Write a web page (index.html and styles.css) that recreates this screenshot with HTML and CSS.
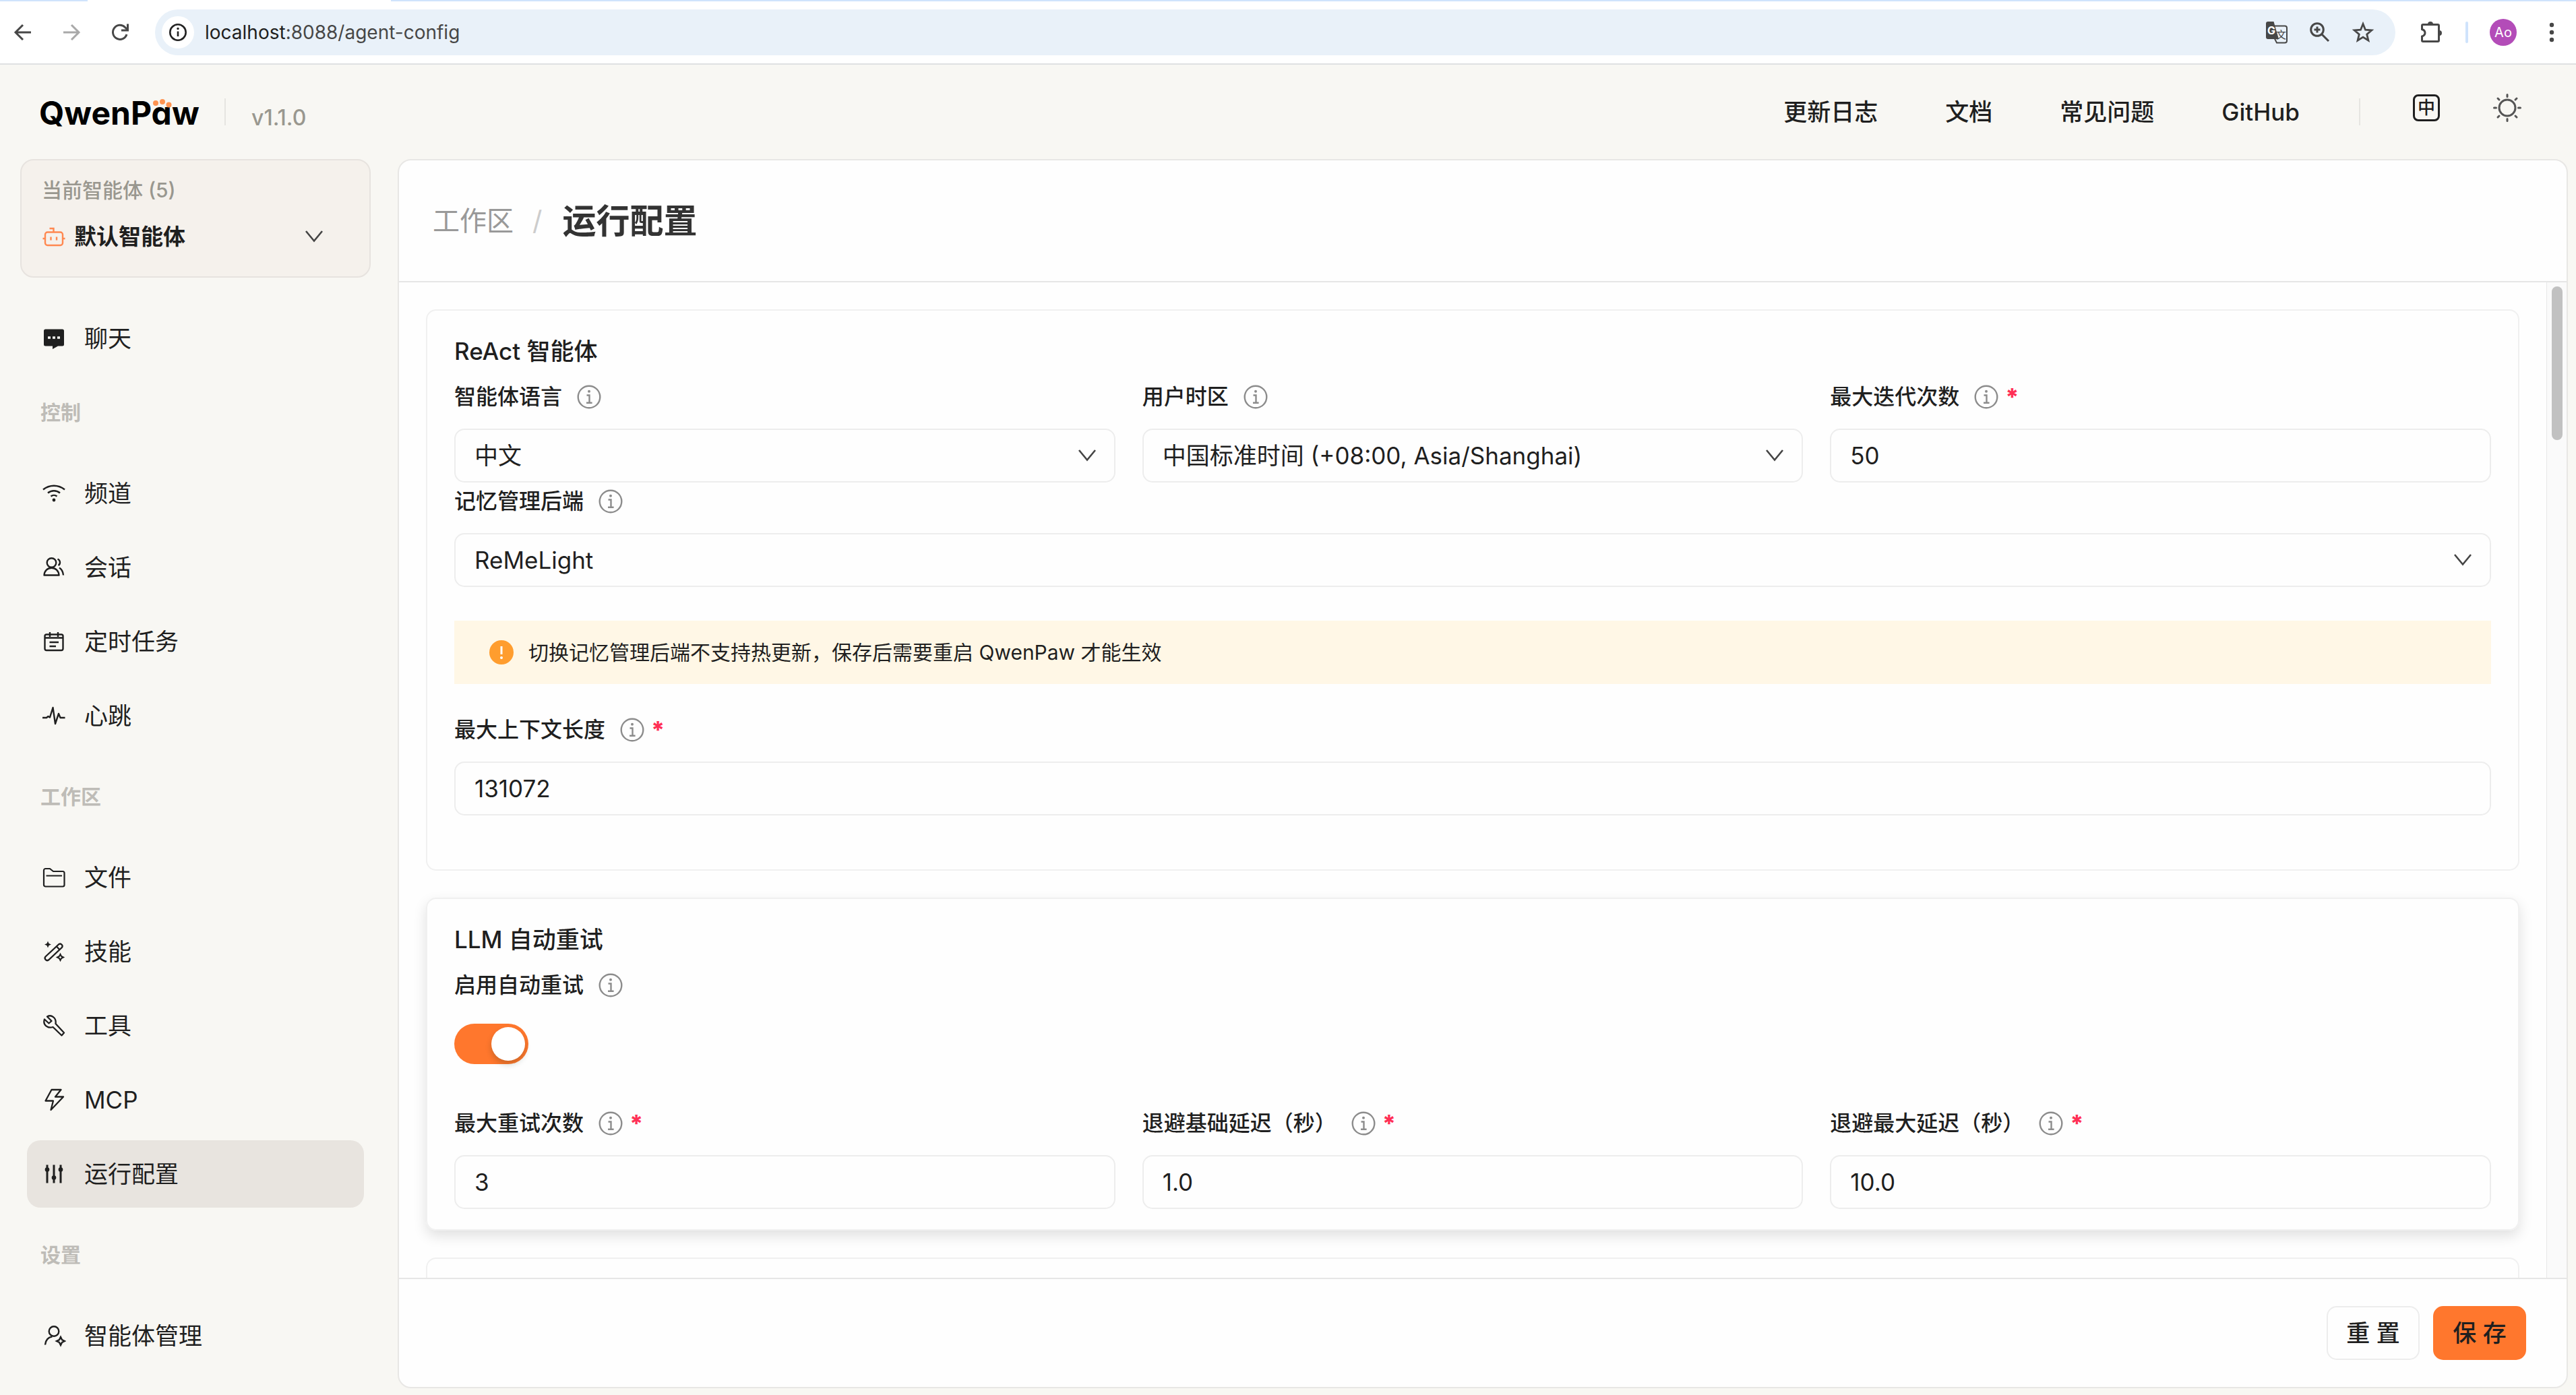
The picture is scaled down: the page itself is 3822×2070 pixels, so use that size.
FILE: index.html
```html
<!DOCTYPE html>
<html lang="zh-CN">
<head>
<meta charset="utf-8">
<title>QwenPaw</title>
<link rel="stylesheet" href="styles.css">
</head>
<body>
<svg class="sprite" aria-hidden="true">
  <symbol id="info" viewBox="0 0 36 36"><g fill="none" stroke="currentColor" stroke-width="2.4"><circle cx="18" cy="18" r="16.3"/><path d="M14.5 15.5h4v11M14 26.7h8.6"/></g><circle cx="18" cy="9.8" r="2" fill="currentColor"/></symbol>
  <symbol id="chevron" viewBox="0 0 28 20"><path d="M2 2l12 14.5L26 2" fill="none" stroke="currentColor" stroke-width="2.6"/></symbol>
</svg>

<div class="browser">
  <div class="tabstrip"><span class="tab-before"></span><span class="tab-active"></span><span class="tab-after"></span></div>
  <div class="toolbar">
    <div class="tools">
      <button class="tool" aria-label="后退"><svg viewBox="0 0 32 32"><path d="M28 16H6M16 5L5 16l11 11" fill="none" stroke="#474747" stroke-width="3"/></svg></button>
      <button class="tool" aria-label="前进"><svg viewBox="0 0 32 32"><path d="M4 16h22M16 5l11 11-11 11" fill="none" stroke="#a9a9a9" stroke-width="3"/></svg></button>
      <button class="tool" aria-label="重新加载"><svg viewBox="0 0 32 32"><path d="M26 19a10.500 10.500 0 1 1-2.500-10.500l3 3" fill="none" stroke="#474747" stroke-width="3"/><path d="M27.500 3.500v9.500H18" fill="none" stroke="#474747" stroke-width="3"/></svg></button>
    </div>
    <div class="omnibox">
      <span class="site-info"><svg viewBox="0 0 32 32"><circle cx="16" cy="16" r="11.700" fill="none" stroke="#222" stroke-width="2.600"/><path d="M16 14.500v7.500" stroke="#222" stroke-width="2.600"/><circle cx="16" cy="10.500" r="1.700" fill="#222"/></svg></span>
      <span class="url"><b>localhost</b>:8088/agent-config</span>
      <svg class="omni-icon" viewBox="0 0 36 36"><path d="M14 8.500h16a3 3 0 0 1 3 3v19a3 3 0 0 1-3 3H18l-3-6" fill="none" stroke="#474747" stroke-width="2"/><text x="17" y="27" font-size="15" fill="#474747">文</text><path d="M5 2h8.500l7.500 26H5a3 3 0 0 1-3-3V5a3 3 0 0 1 3-3z" fill="#474747"/><text x="4" y="21" font-size="16" font-weight="700" fill="#fff">G</text></svg>
      <svg class="omni-icon" viewBox="0 0 36 36"><g fill="none" stroke="#474747" stroke-width="3"><circle cx="14" cy="14" r="9.300"/><path d="M21 21l10 10M9.500 14h9M14 9.500v9"/></g></svg>
      <svg class="omni-icon" viewBox="0 0 36 36"><path d="M18 5.500l3.500 8.700 9.300.700-7.100 6 2.200 9.100L18 25.100 10.100 30l2.200-9.100-7.100-6 9.300-.700z" fill="none" stroke="#474747" stroke-width="2.800"/></svg>
    </div>
    <div class="extras">
      <svg class="omni-icon" viewBox="2 0 36 36"><path d="M7 6.500h22a1.500 1.500 0 0 1 1.500 1.500v22a1.500 1.500 0 0 1-1.500 1.500H7A1.500 1.500 0 0 1 5.500 30v-6c6-2 6-8.500 0-10.500V8A1.500 1.500 0 0 1 7 6.500z" fill="none" stroke="#474747" stroke-width="3"/><path d="M14 6a4 4 0 0 1 8 0zM31 15a4 4 0 0 1 0 8z" fill="#474747"/></svg>
      <span class="extras-line"></span>
      <span class="avatar">Ao</span>
      <svg class="omni-icon" viewBox="0 0 36 36"><g fill="#474747"><circle cx="18" cy="7" r="3.200"/><circle cx="18" cy="18" r="3.200"/><circle cx="18" cy="29" r="3.200"/></g></svg>
    </div>
  </div>
</div>

<header class="topbar">
  <div class="logo">QwenPaw<svg viewBox="0 0 28 20"><g fill="#ff9350"><circle cx="4" cy="10" r="4"/><circle cx="14" cy="8" r="4"/><circle cx="23.500" cy="12.500" r="4"/></g></svg></div>
  <span class="rule"></span>
  <span class="version">v1.1.0</span>
  <nav class="links"><a href="#">更新日志</a><a href="#">文档</a><a href="#">常见问题</a><a href="#">GitHub</a></nav>
  <span class="rule"></span>
  <div class="switches">
    <button class="lang" aria-label="语言">中</button>
    <button class="theme" aria-label="主题"><svg viewBox="0 0 44 44"><g fill="none" stroke="#555" stroke-width="3" stroke-linecap="round"><circle cx="22" cy="22" r="12"/><path d="M22 2.500v3M22 38.500v3M2.500 22h3M38.500 22h3M8 8l2 2M34 34l2 2M8 36l2-2M34 10l2-2"/></g></svg></button>
  </div>
</header>

<div class="layout">
  <aside class="sidebar">
    <button class="agent-card">
      <span class="agent-count">当前智能体 (5)</span>
      <span class="agent-row">
        <svg class="icon robot" viewBox="0 0 36 36"><g fill="none" stroke="currentColor" stroke-width="2.400"><rect x="5" y="11.500" width="26" height="19.500" rx="3.500"/><path d="M17.500 11.500V6h-6M1.500 21H5M31 21h3.500M13.500 18.500v5M22 18.500v5"/></g></svg>
        <span class="agent-name">默认智能体</span>
        <svg class="chev" viewBox="0 0 28 20"><use href="#chevron"/></svg>
      </span>
    </button>
    <nav class="menu">
      <a class="item" href="#"><svg class="icon" viewBox="0 0 36 36"><path d="M5.500 4.500h25A2.500 2.500 0 0 1 33 7v20a2.500 2.500 0 0 1-2.500 2.500H24l-8 4.500v-4.500H5.500A2.500 2.500 0 0 1 3 27V7a2.500 2.500 0 0 1 2.500-2.500z" fill="currentColor"/><path d="M9 17h4M16 17h4M23 17h4" stroke="#f8f7f3" stroke-width="3.400"/></svg>聊天</a>
      <h2 class="group first">控制</h2>
      <a class="item" href="#"><svg class="icon" viewBox="0 0 36 36"><g fill="none" stroke="currentColor" stroke-width="2.400"><path d="M2 12.500a25 25 0 0 1 32 0M9 17.500a14 14 0 0 1 18 0M13.500 22.500a7 7 0 0 1 9 0"/></g><circle cx="18" cy="28" r="2.400" fill="currentColor"/></svg>频道</a>
      <a class="item" href="#"><svg class="icon" viewBox="0 0 36 36"><g fill="none" stroke="currentColor" stroke-width="2.400" stroke-linejoin="round"><circle cx="14.500" cy="11" r="6.800"/><path d="M3.500 29.500C4 23 8.500 18.700 14.500 18.700S25 23 25.500 29.500zM23.500 5.500c4.500 2 4.500 7.500 1 9.500M26 18.500c3.500 2 5.500 6 6 11"/></g></svg>会话</a>
      <a class="item" href="#"><svg class="icon" viewBox="0 0 36 36"><g fill="none" stroke="currentColor" stroke-width="2.400"><rect x="4.500" y="7.500" width="27" height="23.500" rx="2.500"/><path d="M12 4v7M24 4v7M11.500 19h13.500M11.500 25h9.500M5 12.500h26" /></g></svg>定时任务</a>
      <a class="item" href="#"><svg class="icon" viewBox="0 0 36 36"><path d="M1 21h6l2.500-2 2.500 1.500L16.500 6 20 30l5-15 2.500 6h7" fill="none" stroke="currentColor" stroke-width="2.400" stroke-linejoin="round"/></svg>心跳</a>
      <h2 class="group">工作区</h2>
      <a class="item" href="#"><svg class="icon" viewBox="0 0 36 36"><path d="M3 7.500A2.500 2.500 0 0 1 5.500 5H12l5 4h14a2.500 2.500 0 0 1 2.500 2.500V29a2.500 2.500 0 0 1-2.500 2.500H5.500A2.500 2.500 0 0 1 3 29zM6.500 15.500h23.500" fill="none" stroke="currentColor" stroke-width="2.200"/></svg>文件</a>
      <a class="item" href="#"><svg class="icon" viewBox="0 0 36 36"><path d="M5.500 25.500L25.500 7a3.400 3.400 0 0 1 4.500 4.800L10 30.500a3.400 3.400 0 0 1-4.500-5zM22 10.500l4.500 4.800" fill="none" stroke="currentColor" stroke-width="2.300"/><path d="M9 2.500l1.500 3.500 3.500 1.500-3.500 1.500L9 12.500 7.500 9 4 7.500 7.500 6z" fill="currentColor"/><path d="M27.500 22l1.500 3 3 1.500-3 1.500-1.500 3-1.500-3-3-1.500 3-1.500z" fill="none" stroke="currentColor" stroke-width="2"/></svg>技能</a>
      <a class="item" href="#"><svg class="icon" viewBox="0 0 36 36"><path d="M4 8.500l6.500 6 4-3.500-6.500-6.500c6-3.500 14 1.500 12.500 10.500L33 28.500l-3.500 4L16.500 20C9 22.500 1 17 4 8.500z" fill="none" stroke="currentColor" stroke-width="2.300" stroke-linejoin="round"/></svg>工具</a>
      <a class="item" href="#"><svg class="icon" viewBox="0 0 36 36"><path d="M14.500 3h14L20 13.500h12L13.500 33l3.500-13.500H5.500z" fill="none" stroke="currentColor" stroke-width="2.300" stroke-linejoin="round"/></svg>MCP</a>
      <a class="item active" href="#"><svg class="icon" viewBox="0 0 36 36"><path d="M8 4.500v27M18 4.500v27M28 4.500v27" stroke="currentColor" stroke-width="3"/><g fill="currentColor"><circle cx="8" cy="11.500" r="3.300"/><circle cx="18" cy="23.500" r="3.300"/><circle cx="28" cy="11.500" r="3.300"/></g></svg>运行配置</a>
      <h2 class="group">设置</h2>
      <a class="item" href="#"><svg class="icon" viewBox="0 0 36 36"><g fill="none" stroke="currentColor" stroke-width="2.400"><circle cx="18" cy="11.500" r="7.300"/><path d="M5 31.500c.5-7 4-11 10.500-12.300M28 20l2 4 4 2-4 2-2 4-2-4-4-2 4-2z"/></g></svg>智能体管理</a>
    </nav>
  </aside>

  <main class="panel">
    <div class="panel-head">
      <span class="crumb">工作区</span><span class="slash">/</span><h1>运行配置</h1>
    </div>
    <div class="panel-body">
      <form class="scroll" id="config">
        <section class="card">
          <h3>ReAct 智能体</h3>
          <div class="cols">
            <div class="field">
              <label for="language">智能体语言<svg class="tip"><use href="#info"/></svg></label>
              <div class="pick"><select id="language"><option>中文</option></select><svg viewBox="0 0 28 20"><use href="#chevron"/></svg></div>
            </div>
            <div class="field">
              <label for="timezone">用户时区<svg class="tip"><use href="#info"/></svg></label>
              <div class="pick"><select id="timezone"><option>中国标准时间 (+08:00, Asia/Shanghai)</option></select><svg viewBox="0 0 28 20"><use href="#chevron"/></svg></div>
            </div>
            <div class="field">
              <label for="iterations">最大迭代次数<svg class="tip"><use href="#info"/></svg><i>*</i></label>
              <input id="iterations" type="text" value="50">
            </div>
          </div>
          <div class="field">
            <label for="memory">记忆管理后端<svg class="tip"><use href="#info"/></svg></label>
            <div class="pick"><select id="memory"><option>ReMeLight</option></select><svg viewBox="0 0 28 20"><use href="#chevron"/></svg></div>
          </div>
          <div class="notice">
            <svg viewBox="0 0 36 36"><circle cx="18" cy="18" r="18" fill="#ff9d2e"/><path d="M18 9v12" stroke="#fff" stroke-width="3"/><circle cx="18" cy="26" r="2" fill="#fff"/></svg>
            <span>切换记忆管理后端不支持热更新，保存后需要重启 QwenPaw 才能生效</span>
          </div>
          <div class="field spaced">
            <label for="context">最大上下文长度<svg class="tip"><use href="#info"/></svg><i>*</i></label>
            <input id="context" type="text" value="131072">
          </div>
        </section>

        <section class="card raised">
          <h3>LLM 自动重试</h3>
          <div class="field">
            <label for="retry">启用自动重试<svg class="tip"><use href="#info"/></svg></label>
            <div class="toggle-row"><input class="toggle" id="retry" type="checkbox" role="switch" checked></div>
          </div>
          <div class="cols">
            <div class="field">
              <label for="retries">最大重试次数<svg class="tip"><use href="#info"/></svg><i>*</i></label>
              <input id="retries" type="text" value="3">
            </div>
            <div class="field">
              <label for="base-delay">退避基础延迟（秒）<svg class="tip"><use href="#info"/></svg><i>*</i></label>
              <input id="base-delay" type="text" value="1.0">
            </div>
            <div class="field">
              <label for="max-delay">退避最大延迟（秒）<svg class="tip"><use href="#info"/></svg><i>*</i></label>
              <input id="max-delay" type="text" value="10.0">
            </div>
          </div>
        </section>

        <section class="card next"></section>
      </form>
      <div class="track"><div class="thumb"></div></div>
    </div>
    <div class="panel-foot">
      <button type="reset" form="config">重 置</button>
      <button class="primary" type="submit" form="config">保 存</button>
    </div>
  </main>
</div>
</body>
</html>
```
FILE: styles.css
```css
* { box-sizing: border-box; }

body {
  margin: 0;
  height: 100vh;
  display: flex;
  flex-direction: column;
  overflow: hidden;
  background: #f8f7f3;
  color: #1f1f1f;
  font-family: Inter, "Noto Sans CJK SC", sans-serif;
  font-size: 35px;
  line-height: 50px;
}

button, input, select { font: inherit; color: inherit; }
button { background: none; border: 0; padding: 0; }
a { color: inherit; text-decoration: none; }
svg { display: block; flex: none; }
h1, h2, h3 { margin: 0; }
.sprite { display: none; }

/* browser chrome */
.browser {
  flex: none;
  background: #fff;
  border-bottom: 2px solid #dfe0e2;
}
.tabstrip { display: flex; height: 2px; }
.tab-before { width: 130px; background: #cfe3fc; }
.tab-active { width: 450px; }
.tab-after { flex: 1; background: #cfe3fc; }
.toolbar {
  display: flex;
  align-items: center;
  height: 92px;
  padding: 0 18px;
}
.tools { display: flex; gap: 40px; width: 212px; }
.tool svg { width: 32px; height: 32px; }
.omnibox {
  flex: 1;
  display: flex;
  align-items: center;
  gap: 28px;
  height: 68px;
  padding: 0 30px 0 10px;
  border-radius: 34px;
  background: #e9f1f9;
}
.site-info {
  display: grid;
  place-items: center;
  width: 48px;
  height: 48px;
  margin-right: -12px;
  border-radius: 50%;
  background: #fff;
}
.site-info svg { width: 32px; height: 32px; }
.url { flex: 1; font-size: 28px; color: #474747; }
.url b { font-weight: 400; color: #1f1f1f; }
.omni-icon { width: 36px; height: 36px; }
.extras { display: flex; align-items: center; padding-left: 36px; }
.extras-line { width: 4px; height: 32px; margin: 0 32px; border-radius: 2px; background: #cfe3fc; }
.avatar {
  width: 40px;
  height: 40px;
  margin-right: 34px;
  border-radius: 50%;
  background: #b34cb8;
  color: #fff;
  font-size: 20px;
  line-height: 40px;
  text-align: center;
}

/* top bar */
.topbar {
  flex: none;
  display: flex;
  align-items: center;
  height: 140px;
  padding: 0 80px 0 58px;
}
.logo {
  position: relative;
  width: 275px;
  padding-top: 4px;
  color: #000;
  font-size: 48px;
  font-weight: 700;
  font-feature-settings: "cv11";
  line-height: 60px;
}
.logo svg { position: absolute; left: 169px; top: 9px; width: 28px; height: 20px; }
.rule { width: 2px; height: 40px; background: #e6e5e1; }
.version {
  padding: 18px 0 0 38px;
  color: #99978f;
  font-size: 32px;
  font-weight: 500;
  line-height: 36px;
}
.links { display: flex; gap: 100px; margin-left: auto; padding-right: 88px; font-weight: 500; }
.switches { display: flex; align-items: center; gap: 78px; padding: 0 0 12px 78px; }
.lang {
  width: 40px;
  height: 40px;
  border: 3px solid #1f1f1f;
  border-radius: 8px;
  font-size: 26px;
  font-weight: 500;
  line-height: 34px;
}
.theme svg { width: 44px; height: 44px; }

/* layout */
.layout {
  flex: 1;
  min-height: 0;
  display: flex;
  padding: 0 12px 10px 0;
}
.sidebar { flex: none; width: 590px; }
.agent-card {
  display: flex;
  flex-direction: column;
  align-items: stretch;
  width: 520px;
  height: 176px;
  margin: 0 0 40px 30px;
  padding: 24px 30px;
  border: 2px solid #e7e3df;
  border-radius: 20px;
  background: #f5f1ec;
  text-align: left;
}
.agent-count { color: #99978f; font-size: 30px; font-weight: 500; line-height: 40px; }
.agent-row { display: flex; align-items: center; height: 50px; margin-top: 24px; }
.agent-name { flex: 1; padding-left: 12px; font-size: 33px; font-weight: 700; }
.robot { color: #ff8850; }
.chev { width: 32px; height: 20px; margin-right: 36px; color: #444; }
.icon { width: 36px; height: 36px; }

.menu { display: flex; flex-direction: column; padding: 0 50px 0 40px; }
.item {
  display: flex;
  align-items: center;
  gap: 27px;
  height: 100px;
  margin-bottom: 10px;
  padding-left: 22px;
  border-radius: 20px;
}
.item.active { background: #e8e4df; }
.group {
  margin: 20px 0 30px;
  padding-left: 20px;
  color: #bebcb7;
  font-size: 30px;
  font-weight: 600;
  line-height: 80px;
}
.group.first { margin-top: 10px; }

.panel {
  flex: 1;
  min-width: 0;
  display: flex;
  flex-direction: column;
  overflow: hidden;
  border: 2px solid #e8e7e5;
  border-radius: 20px;
  background: #fefefe;
}
.panel-head {
  flex: none;
  display: flex;
  align-items: center;
  height: 181px;
  padding-left: 50px;
  border-bottom: 2px solid #e6e6e6;
}
.crumb { color: #999; font-size: 40px; }
.slash { padding: 0 30px 0 28px; color: #ccc; font-size: 40px; }
.panel-head h1 { color: #333; font-size: 50px; font-weight: 700; }
.panel-body { flex: 1; min-height: 0; display: flex; }
.scroll { flex: 1; min-width: 0; overflow: hidden; padding: 40px; }
.track {
  flex: none;
  width: 30px;
  padding: 6px 0;
  border-left: 1px solid #e8e8e8;
  background: #fafafa;
}
.thumb { width: 16px; height: 228px; margin: 0 auto; border-radius: 8px; background: #c1c1c1; }

/* cards and form */
.card {
  margin-bottom: 40px;
  padding: 40px;
  border: 2px solid #f0f0f0;
  border-radius: 15px;
}
.card.raised { padding-bottom: 30px; box-shadow: 0 8px 20px rgba(0, 0, 0, 0.12); }
.card.next { height: 400px; }
.card h3 { margin-bottom: 20px; font-size: 35px; font-weight: 500; line-height: 40px; }
.cols { display: grid; grid-template-columns: repeat(3, 1fr); gap: 40px; }
.field label {
  display: flex;
  align-items: center;
  height: 55px;
  margin-bottom: 20px;
  font-size: 32px;
  font-weight: 500;
}
.tip { width: 36px; height: 36px; margin-left: 22px; color: #8c8c8c; }
.field i { margin-left: 10px; color: #ff2f55; font-size: 35px; font-style: normal; font-weight: 800; }
.field input[type="text"], .pick select {
  display: block;
  width: 100%;
  height: 80px;
  padding: 0 28px;
  border: 2px solid #ededed;
  border-radius: 15px;
  outline: 0;
  background: #fefefe;
  appearance: none;
}
.pick { display: grid; align-items: center; }
.pick > * { grid-area: 1 / 1; }
.pick svg { justify-self: end; width: 28px; height: 20px; margin-right: 28px; color: #444; pointer-events: none; }
.spaced { margin-bottom: 40px; }
.notice {
  display: flex;
  align-items: center;
  gap: 22px;
  height: 94px;
  margin: 50px 0 40px;
  padding-left: 52px;
  background: #fff7e6;
  font-size: 30px;
}
.notice svg { width: 36px; height: 36px; }
.toggle-row { display: flex; align-items: center; height: 80px; margin-bottom: 50px; }
.toggle {
  appearance: none;
  display: flex;
  justify-content: flex-end;
  width: 110px;
  height: 60px;
  margin: 0;
  padding: 5px;
  border-radius: 30px;
  background: #ff772d;
}
.toggle::before {
  content: "";
  width: 50px;
  height: 50px;
  border-radius: 50%;
  background: #fff;
  box-shadow: 0 5px 10px rgba(0, 35, 11, 0.2);
}

.panel-foot {
  flex: none;
  display: flex;
  justify-content: flex-end;
  gap: 20px;
  padding: 40px 60px 40px 0;
  border-top: 2px solid #e6e6e6;
}
.panel-foot button {
  width: 138px;
  height: 80px;
  border: 2px solid #ededed;
  border-radius: 15px;
  font-weight: 500;
}
.panel-foot .primary { border-color: #ff772d; background: #ff772d; }
```
